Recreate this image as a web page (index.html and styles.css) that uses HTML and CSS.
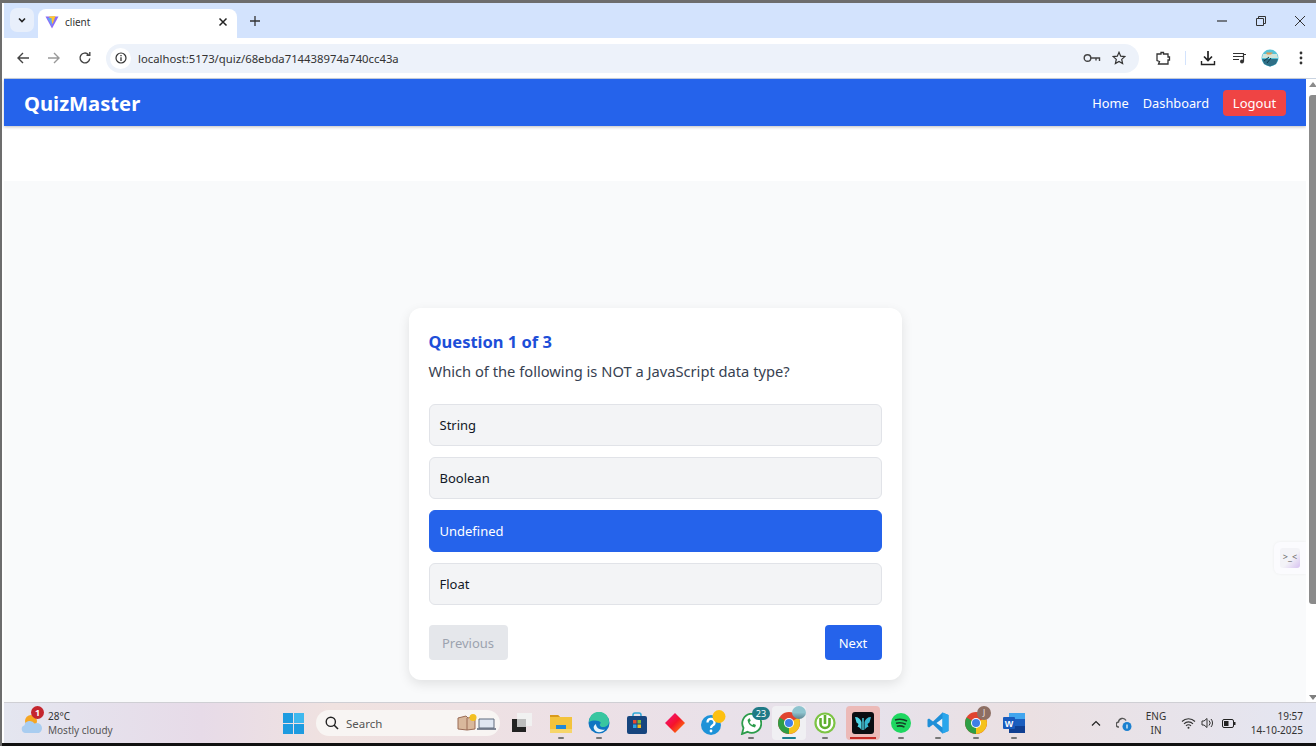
FILE: index.html
```html
<!DOCTYPE html>
<html lang="en">

<head>
    <meta charset="UTF-8">
    <title>client</title>
    <link rel="stylesheet" href="styles.css">
</head>

<body>
    <div class="window">
        <!-- Browser tab strip -->
        <div class="tabstrip">
            <div class="tab-search">
                <svg width="10" height="10" viewBox="0 0 10 10"><path d="M2 3.5 5 6.5 8 3.5" fill="none" stroke="#222" stroke-width="1.6"/></svg>
            </div>
            <div class="tab">
                <svg width="14" height="14" viewBox="0 0 14 14">
                    <path d="M0.5 1.5 13.5 1.5 7 13.5Z" fill="#8b6cf6"/>
                    <path d="M4 1.5 10.5 1 7.6 9Z" fill="#ffc72e"/>
                    <path d="M2.5 3 6.5 3 7 11Z" fill="#5fa8f5"/>
                </svg>
                <span class="tab-title">client</span>
                <svg class="tab-close" width="10" height="10" viewBox="0 0 10 10"><path d="M1.5 1.5 8.5 8.5M8.5 1.5 1.5 8.5" stroke="#222" stroke-width="1.5"/></svg>
            </div>
            <svg class="new-tab" width="12" height="12" viewBox="0 0 12 12"><path d="M6 1V11M1 6H11" stroke="#333" stroke-width="1.3"/></svg>
            <div class="window-controls">
                <svg width="12" height="12" viewBox="0 0 12 12"><path d="M1 6H11" stroke="#333" stroke-width="1.2"/></svg>
                <svg width="12" height="12" viewBox="0 0 12 12"><path d="M1.5 3.5H8.5V10.5H1.5ZM3.5 3.5V1.5H10.5V8.5H8.5" fill="none" stroke="#333" stroke-width="1"/></svg>
                <svg width="12" height="12" viewBox="0 0 12 12"><path d="M1 1 11 11M11 1 1 11" stroke="#333" stroke-width="1"/></svg>
            </div>
        </div>

        <!-- Address bar row -->
        <div class="toolbar">
            <svg class="tool" width="14" height="14" viewBox="0 0 14 14"><path d="M13 7H2M7 2 2 7 7 12" fill="none" stroke="#444" stroke-width="1.4"/></svg>
            <svg class="tool" width="14" height="14" viewBox="0 0 14 14"><path d="M1 7H12M7 2 12 7 7 12" fill="none" stroke="#999" stroke-width="1.4"/></svg>
            <svg class="tool" width="14" height="14" viewBox="0 0 14 14"><path d="M11.8 7.5A4.9 4.9 0 1 1 10.4 3.5M11.8 1V4.3H8.5" fill="none" stroke="#444" stroke-width="1.4"/></svg>
            <div class="omnibox">
                <span class="site-info">
                    <svg width="12" height="12" viewBox="0 0 12 12"><circle cx="6" cy="6" r="5" fill="none" stroke="#333" stroke-width="1.2"/><path d="M6 5.2V9M6 3V4.2" stroke="#333" stroke-width="1.3"/></svg>
                </span>
                <span class="url">localhost:5173/quiz/68ebda714438974a740cc43a</span>
                <svg class="omni-icon" width="18" height="12" viewBox="0 0 18 12"><circle cx="4.5" cy="6" r="3.3" fill="none" stroke="#444" stroke-width="1.4"/><path d="M8 6H16.5V9M13 6V8.5" fill="none" stroke="#444" stroke-width="1.4"/></svg>
                <svg class="omni-icon" width="14" height="14" viewBox="0 0 14 14"><path d="M7 1.3 8.7 5.2 12.8 5.6 9.7 8.4 10.6 12.6 7 10.4 3.4 12.6 4.3 8.4 1.2 5.6 5.3 5.2Z" fill="none" stroke="#333" stroke-width="1.2"/></svg>
            </div>
            <svg class="tool-right ext" width="16" height="16" viewBox="0 0 16 16"><path d="M2 4H6V2.5H8.5V4H13V7H14.5V10H13V14H3.5L4.5 11.5 2 10.5Z" fill="none" stroke="#333" stroke-width="1.3"/></svg>
            <span class="tool-sep"></span>
            <svg class="tool-right dl" width="16" height="16" viewBox="0 0 16 16"><path d="M8 1V9.5M4 6.5 8 10.5 12 6.5" fill="none" stroke="#222" stroke-width="1.7"/><path d="M1.5 11V14.5H14.5V11" fill="none" stroke="#222" stroke-width="1.4"/></svg>
            <svg class="tool-right media" width="16" height="14" viewBox="0 0 16 14"><path d="M1 2.5H12M1 5.5H12M1 8.5H7" stroke="#333" stroke-width="1.2"/><circle cx="10" cy="10.5" r="2" fill="#333"/><path d="M11.5 10.5V3.5H14" fill="none" stroke="#333" stroke-width="1.2"/></svg>
            <svg class="tool-right avatar" width="18" height="18" viewBox="0 0 18 18">
                <circle cx="9" cy="9" r="8.5" fill="#56c3d8"/>
                <path d="M2 5H16L17 9 1 9Z" fill="#cfe4da"/>
                <path d="M5 3.5H12L10 5.5H6Z" fill="#e09a55"/>
                <path d="M1 10H17L15 15 9 17.5 3 15Z" fill="#2e6f86"/>
                <path d="M3 12 8 8M6 14 10 9" stroke="#0f3a4c" stroke-width="1"/>
            </svg>
            <svg class="tool-right more" width="4" height="14" viewBox="0 0 4 14"><circle cx="2" cy="2" r="1.4" fill="#333"/><circle cx="2" cy="7" r="1.4" fill="#333"/><circle cx="2" cy="12" r="1.4" fill="#333"/></svg>
        </div>

        <!-- Page + scrollbar -->
        <div class="viewport">
            <div class="page">
                <nav class="navbar">
                    <div class="brand">QuizMaster</div>
                    <div class="nav-links">
                        <a>Home</a>
                        <a>Dashboard</a>
                        <button class="logout">Logout</button>
                    </div>
                </nav>
                <div class="nav-spacer"></div>
                <main class="quiz-area">
                    <div class="card">
                        <h2>Question 1 of 3</h2>
                        <p>Which of the following is NOT a JavaScript data type?</p>
                        <div class="options">
                            <button class="option">String</button>
                            <button class="option">Boolean</button>
                            <button class="option selected">Undefined</button>
                            <button class="option">Float</button>
                        </div>
                        <div class="card-actions">
                            <button class="btn-prev">Previous</button>
                            <button class="btn-next">Next</button>
                        </div>
                    </div>
                </main>
                <div class="side-widget">
                    <span class="side-face">&gt;_&lt;</span>
                </div>
            </div>
            <div class="scrollbar">
                <span class="arrow-up"></span>
                <span class="thumb"></span>
                <span class="arrow-down"></span>
            </div>
        </div>

        <!-- Windows taskbar -->
        <footer class="taskbar">
            <div class="weather">
                <span class="weather-icon">
                    <svg width="24" height="22" viewBox="0 0 24 22">
                        <circle cx="11" cy="9" r="6" fill="#f6a623"/>
                        <path d="M5.5 21A4 4 0 0 1 4.5 13.2 5.5 5.5 0 0 1 14.5 11.5 4.8 4.8 0 0 1 19 21Z" fill="#a9cdf0"/>
                    </svg>
                    <span class="weather-badge">1</span>
                </span>
                <div class="weather-text">
                    <div>28°C</div>
                    <div class="weather-sub">Mostly cloudy</div>
                </div>
            </div>

            <div class="task-apps">
                <span class="task-btn start">
                    <svg width="21" height="21" viewBox="0 0 21 21">
                        <path d="M0 0H10V10H0ZM11 0H21V10H11ZM0 11H10V21H0ZM11 11H21V21H11Z" fill="#1e9be0"/>
                        <path d="M11 0H21V10H11Z" fill="#3fb8ee"/>
                    </svg>
                </span>
                <div class="searchbox">
                    <svg width="14" height="14" viewBox="0 0 14 14"><circle cx="5.8" cy="5.8" r="4.6" fill="none" stroke="#222" stroke-width="1.4"/><path d="M9 9 13 13" stroke="#222" stroke-width="1.6"/></svg>
                    <span class="search-label">Search</span>
                    <svg class="search-art" width="40" height="18" viewBox="0 0 40 18">
                        <path d="M1 4 9 2 11 4 18 2V15L10 16 1 15Z" fill="#d9b89c" stroke="#9a6b55" stroke-width="1"/>
                        <path d="M10 4V16" stroke="#9a6b55"/>
                        <circle cx="16" cy="3.5" r="3.5" fill="#f2c021"/>
                        <path d="M22 5H37V14H22Z" fill="#dfe7f2" stroke="#5f6b7c"/>
                        <path d="M20 15H39" stroke="#5f6b7c" stroke-width="1.6"/>
                    </svg>
                </div>
                <span class="task-btn">
                    <svg width="20" height="20" viewBox="0 0 20 20">
                        <path d="M0 6H14V19H0Z" fill="#222"/>
                        <path d="M5 0H20V13H13V6H5Z" fill="#f1f1f1"/>
                        <path d="M5 6H14V14H5Z" fill="#bdbdbd"/>
                    </svg>
                </span>
                <span class="task-btn running explorer">
                    <svg width="22" height="20" viewBox="0 0 22 20">
                        <path d="M0 2H8L10 4H22V20H0Z" fill="#f3c33c"/>
                        <path d="M0 2H8L10 4H0Z" fill="#d99a1c"/>
                        <path d="M6 12H16V16H6Z" fill="#1f88d8"/>
                        <path d="M0 16H22V20H0Z" fill="#f7d56a"/>
                    </svg>
                </span>
                <span class="task-btn running">
                    <svg width="22" height="22" viewBox="0 0 22 22">
                        <circle cx="11" cy="11" r="10.5" fill="#0f75c2"/>
                        <path d="M1 10A10 10 0 0 1 21 9.5C21 14 17 15.5 14 15 11.5 14.5 11 12 13 11 11 8 5 8 1 10Z" fill="#39c6a0"/>
                        <path d="M8 12C8 16 12 18.5 17 17.5 14 21 8 21.5 6 17 5 15 6 13 8 12Z" fill="#e6f3fb"/>
                    </svg>
                </span>
                <span class="task-btn">
                    <svg width="20" height="22" viewBox="0 0 20 22">
                        <path d="M6 5V3A2 2 0 0 1 8 1H12A2 2 0 0 1 14 3V5" fill="none" stroke="#2ea8d8" stroke-width="1.5"/>
                        <rect y="4" width="20" height="18" rx="2" fill="#17457e"/>
                        <path d="M6 8H9.5V11.5H6Z" fill="#e8492f"/>
                        <path d="M10.5 8H14V11.5H10.5Z" fill="#7dbb3a"/>
                        <path d="M6 12.5H9.5V16H6Z" fill="#2aa5e6"/>
                        <path d="M10.5 12.5H14V16H10.5Z" fill="#f5bb1c"/>
                    </svg>
                </span>
                <span class="task-btn">
                    <svg width="22" height="22" viewBox="0 0 22 22">
                        <defs>
                            <linearGradient id="diamond" x1="0" y1="0" x2="1" y2="1">
                                <stop offset="0" stop-color="#f0128a"/>
                                <stop offset="0.5" stop-color="#f5132b"/>
                                <stop offset="1" stop-color="#ff9a00"/>
                            </linearGradient>
                        </defs>
                        <path d="M11 1 21 11 11 21 1 11Z" fill="url(#diamond)"/>
                    </svg>
                </span>
                <span class="task-btn">
                    <svg width="26" height="26" viewBox="0 0 26 26">
                        <circle cx="11" cy="15" r="10" fill="#1d92d8"/>
                        <path d="M7.5 12.5A3.5 3.5 0 1 1 12.5 15.5C11.3 16.2 11 17 11 18" fill="none" stroke="#fff" stroke-width="2.2"/>
                        <circle cx="11" cy="21" r="1.4" fill="#fff"/>
                        <circle cx="19" cy="6.5" r="6.5" fill="#fdc010"/>
                    </svg>
                </span>
                <span class="task-btn running">
                    <svg width="22" height="24" viewBox="0 0 22 24">
                        <path d="M2 23 3.5 17A9.5 9.5 0 1 1 7.5 20.8Z" fill="#fff" stroke="#2c9c4b" stroke-width="1.8"/>
                        <path d="M7.5 9C8 13 10.5 15.5 15 16.5L16 14 13.5 12.8 12.5 14C11 13.4 10 12.2 9.5 11L10.8 9.8 9.5 7Z" fill="#2c9c4b"/>
                    </svg>
                    <span class="count-badge">23</span>
                </span>
                <span class="task-btn active">
                    <svg width="24" height="24" viewBox="0 0 24 24">
                        <circle cx="12" cy="12" r="11" fill="#e0432f"/>
                        <path d="M12 12 21.5 6.5A11 11 0 0 1 12 23Z" fill="#f5c21b"/>
                        <path d="M12 12 12 23A11 11 0 0 1 2.5 6.5Z" fill="#2f9e46"/>
                        <circle cx="12" cy="12" r="5" fill="#fff"/>
                        <circle cx="12" cy="12" r="4" fill="#3f7fe8"/>
                    </svg>
                    <span class="profile-badge"></span>
                </span>
                <span class="task-btn running">
                    <svg width="22" height="22" viewBox="0 0 22 22">
                        <circle cx="11" cy="11" r="9.5" fill="#fff" stroke="#7cc444" stroke-width="2.2"/>
                        <path d="M6.5 6V11.5A4.5 4.5 0 0 0 15.5 11.5V6M11 3V12" fill="none" stroke="#5fae2e" stroke-width="2.6"/>
                    </svg>
                </span>
                <span class="task-btn pinned-red">
                    <svg width="22" height="22" viewBox="0 0 22 22">
                        <rect width="22" height="22" rx="3" fill="#0b0d12"/>
                        <path d="M3 5C6.5 5 8.5 7 9.5 10V18C8 15.5 6.5 15 5.5 15L6.5 12 4.5 10.5Z" fill="#4fd4e6"/>
                        <path d="M19 5C15.5 5 13.5 7 12.5 10V18C14 15.5 15.5 15 16.5 15L15.5 12 17.5 10.5Z" fill="#36b6cf"/>
                        <path d="M10.3 6H11.7V18H10.3Z" fill="#4fd4e6"/>
                    </svg>
                </span>
                <span class="task-btn running">
                    <svg width="20" height="20" viewBox="0 0 20 20">
                        <circle cx="10" cy="10" r="10" fill="#1ed760"/>
                        <path d="M4 7C8 5.8 12.5 6.2 16 8M5 10.3C8.2 9.4 12 9.8 14.8 11.3M5.8 13.2C8.4 12.6 11.2 12.9 13.5 14.1" fill="none" stroke="#143d24" stroke-width="1.6"/>
                    </svg>
                </span>
                <span class="task-btn running code">
                    <svg width="22" height="22" viewBox="0 0 22 22">
                        <path d="M15.5 0.5 21.5 3V19L15.5 21.5 6 12.5 2 15.5 0.5 14.5V7.5L2 6.5 6 9.5Z" fill="#1f8fd8"/>
                        <path d="M15.5 6.5 9.5 11 15.5 15.5Z" fill="#eef2f7"/>
                        <path d="M15.5 0.5 21.5 3V19L15.5 21.5Z" fill="#2aa6ec"/>
                    </svg>
                </span>
                <span class="task-btn running">
                    <svg width="24" height="24" viewBox="0 0 24 24">
                        <circle cx="12" cy="12" r="11" fill="#e0432f"/>
                        <path d="M12 12 21.5 6.5A11 11 0 0 1 12 23Z" fill="#f5c21b"/>
                        <path d="M12 12 12 23A11 11 0 0 1 2.5 6.5Z" fill="#2f9e46"/>
                        <circle cx="12" cy="12" r="5" fill="#fff"/>
                        <circle cx="12" cy="12" r="4" fill="#3f7fe8"/>
                    </svg>
                    <span class="letter-badge">J</span>
                </span>
                <span class="task-btn running">
                    <svg width="22" height="20" viewBox="0 0 22 20">
                        <path d="M6 0H22V20H6Z" fill="#1b5ebe"/>
                        <path d="M6 0H22V6H6Z" fill="#41a5ee"/>
                        <path d="M6 13H22V20H6Z" fill="#103f91"/>
                        <rect y="4" width="12" height="12" rx="1" fill="#185abd"/>
                        <text x="6" y="13.5" class="word-letter">W</text>
                    </svg>
                </span>
            </div>

            <div class="tray">
                <svg class="tray-chevron" width="10" height="6" viewBox="0 0 10 6"><path d="M1 5.5 5 1.5 9 5.5" fill="none" stroke="#222" stroke-width="1.2"/></svg>
                <svg class="tray-cloud" width="16" height="15" viewBox="0 0 16 15">
                    <path d="M3 11A2.5 2.5 0 0 1 2.5 6 4 4 0 0 1 10 4.5" fill="none" stroke="#555" stroke-width="1.4"/>
                    <circle cx="11" cy="10.5" r="4.5" fill="#1b80d0"/>
                    <path d="M11 8.5V12.5" stroke="#fff" stroke-width="1.2"/>
                </svg>
                <div class="lang"><div>ENG</div><div>IN</div></div>
                <svg class="tray-wifi" width="15" height="12" viewBox="0 0 15 12">
                    <path d="M1 4.5A9 9 0 0 1 14 4.5M3 6.8A6.2 6.2 0 0 1 12 6.8M5 9A3.2 3.2 0 0 1 10 9" fill="none" stroke="#333" stroke-width="1.1"/>
                    <circle cx="7.5" cy="10.8" r="1" fill="#333"/>
                </svg>
                <svg class="tray-sound" width="13" height="12" viewBox="0 0 13 12">
                    <path d="M1 4H3L6 1.5V10.5L3 8H1Z" fill="none" stroke="#333" stroke-width="1"/>
                    <path d="M8 3.5A3.5 3.5 0 0 1 8 8.5M10 2A6 6 0 0 1 10 10" fill="none" stroke="#333" stroke-width="1"/>
                </svg>
                <svg class="tray-battery" width="14" height="9" viewBox="0 0 14 9">
                    <rect x="0.5" y="0.5" width="11" height="8" rx="1.5" fill="none" stroke="#222"/>
                    <rect x="2" y="2" width="4.5" height="5" fill="#222"/>
                    <rect x="12" y="3" width="1.5" height="3" fill="#222"/>
                </svg>
                <div class="clock"><div>19:57</div><div>14-10-2025</div></div>
            </div>
        </footer>
    </div>
</body>

</html>
```

FILE: styles.css
```css
/* Page reset, window frame */
body {
    margin: 0;
    width: 1316px;
    height: 746px;
    overflow: hidden;
    background-color: #6d6d6d;
    font-family: "Noto Sans", "Open Sans", sans-serif;
}

.window {
    height: 743px;
    margin-top: 3px;
    margin-left: 2px;
    background-color: #ffffff;
    display: flex;
    flex-direction: column;
    border-bottom: 3px solid #111;
    box-sizing: border-box;
}

/* Tab strip */
.tabstrip {
    height: 35px;
    margin-left: 2px;
    flex-shrink: 0;
    background-color: #d3e3fd;
    display: flex;
    align-items: flex-end;
}

.tab-search {
    width: 24px;
    height: 24px;
    margin: 0 4px 6px 6px;
    border-radius: 7px;
    background-color: #e8effb;
    display: flex;
    align-items: center;
    justify-content: center;
}

.tab {
    width: 199px;
    height: 29px;
    background-color: #ffffff;
    border-radius: 8px 8px 0 0;
    display: flex;
    align-items: center;
    padding: 0 9px 4px 7px;
    box-sizing: border-box;
    font-size: 10px;
    color: #333;
}

.tab-title {
    margin-left: 6px;
    flex: 1;
}

.new-tab {
    margin: 0 0 11px 12px;
}

.window-controls {
    margin-left: auto;
    margin-bottom: 11px;
    display: flex;
    gap: 27px;
    padding-right: 10px;
}

/* Address bar */
.toolbar {
    height: 41px;
    margin-left: 2px;
    flex-shrink: 0;
    display: flex;
    align-items: center;
    background-color: #ffffff;
    border-bottom: 1px solid #c9d3e0;
    box-sizing: border-box;
    padding-left: 12px;
}

.tool {
    margin-right: 17px;
}

.omnibox {
    width: 1033px;
    height: 29px;
    margin-left: -3px;
    border-radius: 15px;
    background-color: #edf2fa;
    display: flex;
    align-items: center;
    box-sizing: border-box;
    padding: 0 13px 0 4px;
}

.site-info {
    width: 21px;
    height: 21px;
    border-radius: 50%;
    background-color: #ffffff;
    display: flex;
    align-items: center;
    justify-content: center;
}

.url {
    margin-left: 7px;
    font-size: 11.3px;
    color: #333;
    flex: 1;
}

.omni-icon {
    margin-left: 11px;
}

.ext {
    margin-left: 16px;
}

.tool-sep {
    width: 1px;
    height: 14px;
    margin-left: 14px;
    background-color: #d3e3fd;
}

.dl {
    margin-left: 14px;
}

.media {
    margin-left: 16px;
}

.avatar {
    margin-left: 13px;
}

.more {
    margin-left: 20px;
}

/* Page area */
.viewport {
    flex: 1;
    min-height: 0;
    display: flex;
}

.page {
    position: relative;
    flex: 1;
    margin-left: 2px;
    display: flex;
    flex-direction: column;
    background-color: #ffffff;
}

.navbar {
    height: 47px;
    flex-shrink: 0;
    background-color: #2563eb;
    box-shadow: 0 1px 3px rgba(0, 0, 0, 0.25);
    display: flex;
    align-items: center;
    justify-content: space-between;
    padding: 1px 20px 0;
    box-sizing: border-box;
    color: #ffffff;
}

.brand {
    font-size: 20.2px;
    font-weight: 700;
}

.nav-links {
    display: flex;
    align-items: center;
    gap: 14px;
    font-size: 12.8px;
}

.logout {
    height: 26px;
    width: 63px;
    padding: 0;
    border: none;
    border-radius: 4px;
    background-color: #ef4444;
    color: #ffffff;
    font-family: inherit;
    font-size: 13px;
}

.nav-spacer {
    height: 55px;
    flex-shrink: 0;
}

.quiz-area {
    flex: 1;
    background-color: #f9fafb;
    display: flex;
    justify-content: center;
    padding-top: 127px;
}

/* Quiz card */
.card {
    width: 493px;
    height: 372px;
    padding: 20px;
    box-sizing: border-box;
    background-color: #ffffff;
    border-radius: 12px;
    box-shadow: 0 4px 12px rgba(0, 0, 0, 0.1);
}

.card h2 {
    margin: 0;
    font-size: 16.5px;
    line-height: 28px;
    font-weight: 700;
    color: #1d4ed8;
}

.card p {
    margin: 3px 0 21px;
    font-size: 14.7px;
    line-height: 24px;
    color: #374151;
}

.options {
    display: flex;
    flex-direction: column;
    gap: 11px;
}

.option {
    height: 42px;
    padding: 0 10px;
    text-align: left;
    font-family: inherit;
    font-size: 13px;
    color: #111827;
    background-color: #f3f4f6;
    border: 1px solid #e1e3e8;
    border-radius: 6px;
}

.option.selected {
    background-color: #2563eb;
    border-color: #2563eb;
    color: #ffffff;
}

.card-actions {
    display: flex;
    justify-content: space-between;
    margin-top: 20px;
}

.btn-prev,
.btn-next {
    height: 35px;
    padding: 0;
    border: none;
    border-radius: 4px;
    font-family: inherit;
    font-size: 13px;
}

.btn-prev {
    width: 79px;
    background-color: #e5e7eb;
    color: #9ca3af;
}

.btn-next {
    width: 57px;
    background-color: #2563eb;
    color: #ffffff;
}

/* Small extension tab on the right edge */
.side-widget {
    position: absolute;
    right: 0;
    top: 463px;
    width: 32px;
    height: 32px;
    background-color: #fbfbfe;
    border-radius: 6px 0 0 6px;
    box-shadow: 0 0 3px rgba(0, 0, 0, 0.06);
    display: flex;
    align-items: center;
    justify-content: center;
}

.side-face {
    width: 20px;
    height: 20px;
    border-radius: 3px;
    background: linear-gradient(135deg, #f3f3f7 55%, #d6c1f0);
    font-size: 9px;
    line-height: 18px;
    text-align: center;
    color: #666;
}

/* Scrollbar */
.scrollbar {
    width: 10px;
    flex-shrink: 0;
    position: relative;
    background-color: #ffffff;
}

.thumb {
    position: absolute;
    left: 3px;
    right: 0;
    top: 16px;
    height: 509px;
    background-color: #8b8b8b;
    border-radius: 3px 0 0 3px;
}

.arrow-up,
.arrow-down {
    position: absolute;
    left: 3px;
    width: 0;
    height: 0;
    border-left: 4px solid transparent;
    border-right: 4px solid transparent;
}

.arrow-up {
    top: 3px;
    border-bottom: 5px solid #8b8b8b;
}

.arrow-down {
    bottom: 2px;
    border-top: 5px solid #7f7f7f;
}

/* Taskbar */
.taskbar {
    height: 41px;
    margin-left: 2px;
    flex-shrink: 0;
    display: flex;
    align-items: center;
    position: relative;
    border-top: 1px solid #cfcfd4;
    box-sizing: border-box;
    background: linear-gradient(90deg, #e4e6f0 0%, #e7dbe8 15%, #f0e2e0 25%, #ece0e6 45%, #e6e2ec 65%, #ebe0e2 78%, #e4e6f2 100%);
    color: #333;
}

.weather {
    width: 278px;
    flex-shrink: 0;
    box-sizing: border-box;
    padding-left: 16px;
    display: flex;
    align-items: center;
    font-size: 10px;
    line-height: 14px;
}

.weather-icon {
    position: relative;
    width: 24px;
    height: 22px;
    margin-right: 4px;
}

.weather-badge {
    position: absolute;
    top: -6px;
    left: 11px;
    width: 13px;
    height: 13px;
    border-radius: 50%;
    background-color: #c4262e;
    color: #ffffff;
    font-size: 9px;
    font-weight: 700;
    line-height: 13px;
    text-align: center;
}

.weather-sub {
    color: #555;
}

.task-apps {
    display: flex;
    align-items: center;
}

.task-btn {
    position: relative;
    width: 38px;
    height: 38px;
    display: flex;
    align-items: center;
    justify-content: center;
    box-sizing: border-box;
}

.task-btn.start {
    width: 22px;
    margin-right: 12px;
}

.task-btn.explorer {
    margin-left: 1px;
}

.task-btn.code {
    margin-left: -1px;
}

.task-btn.running::after {
    content: "";
    position: absolute;
    left: 16px;
    bottom: 3px;
    width: 6px;
    height: 2px;
    border-radius: 1px;
    background-color: #777;
}

.task-btn.active {
    background-color: #f0f0f3;
    border-radius: 4px;
    width: 34px;
    height: 34px;
    margin-left: 2px;
}

.task-btn.active::after {
    content: "";
    position: absolute;
    left: 10px;
    bottom: 1px;
    width: 14px;
    height: 2px;
    border-radius: 1px;
    background-color: #1b7f8f;
}

.task-btn.pinned-red {
    background-color: #ecbab8;
    border-radius: 4px;
    width: 34px;
    height: 34px;
    margin: 0 2px;
}

.task-btn.pinned-red::after {
    content: "";
    position: absolute;
    left: 4px;
    bottom: 1px;
    width: 26px;
    height: 2px;
    background-color: #c42a26;
}

.searchbox {
    width: 184px;
    height: 26px;
    margin-right: 3px;
    border-radius: 13px;
    background-color: #f8f5f3;
    display: flex;
    align-items: center;
    box-sizing: border-box;
    padding: 0 3px 0 9px;
    font-size: 11.5px;
    color: #555;
}

.search-label {
    margin-left: 7px;
    flex: 1;
}

.count-badge {
    position: absolute;
    top: 3px;
    right: 0;
    min-width: 18px;
    height: 13px;
    border-radius: 7px;
    background-color: #1f7a86;
    color: #ffffff;
    font-size: 9px;
    line-height: 13px;
    text-align: center;
}

.profile-badge {
    position: absolute;
    top: 0;
    right: 0;
    width: 14px;
    height: 13px;
    border-radius: 50%;
    background: linear-gradient(#8fc4cf 50%, #5c8290);
}

.letter-badge {
    position: absolute;
    top: 2px;
    right: 4px;
    width: 14px;
    height: 14px;
    border-radius: 50%;
    background-color: #8d6e63;
    color: #f1e6e0;
    font-size: 8px;
    line-height: 14px;
    text-align: center;
}

.word-letter {
    font-family: "Liberation Sans", sans-serif;
    font-size: 9px;
    font-weight: 700;
    fill: #ffffff;
    text-anchor: middle;
}

/* System tray */
.tray {
    flex: 1;
    display: flex;
    align-items: center;
    font-size: 10px;
    line-height: 14px;
    color: #333;
}

.tray-chevron {
    margin-left: 58px;
}

.tray-cloud {
    margin-left: 15px;
}

.lang {
    margin-left: 12px;
    width: 24px;
    text-align: center;
}

.tray-wifi {
    margin-left: 13px;
}

.tray-sound {
    margin-left: 5px;
}

.tray-battery {
    margin-left: 8px;
}

.clock {
    margin-left: auto;
    padding-right: 13px;
    text-align: right;
}
```
